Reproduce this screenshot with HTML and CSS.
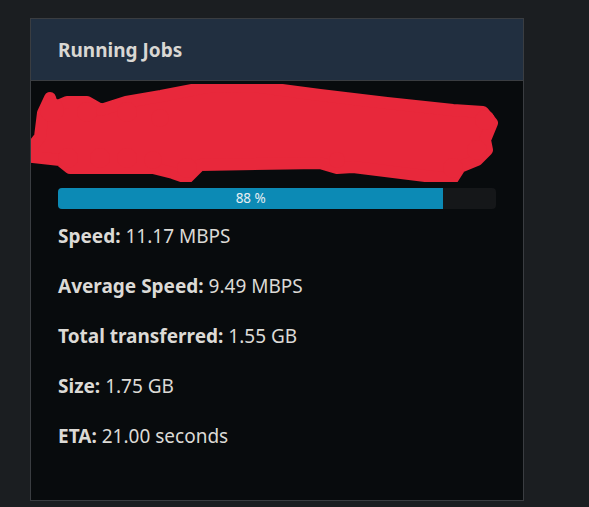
FILE: index.html
```html
<!DOCTYPE html>
<html>
<head>
<meta charset="utf-8">
<link rel="stylesheet" href="styles.css">
</head>
<body>
<div class="page">
  <section class="card">
    <header class="card-header"><h2 class="title">Running Jobs</h2></header>
    <div class="card-body">
      <svg class="redact" width="492" height="98" viewBox="0 0 492 98">
        <g fill="#e8283b">
          <path d="M19 14 L22 24 L36 18 L56 18 L70 26 L95 18 L130 12 L176 3 L222 2 L266 8 L289 11 L356 19 L422 26 L452 28 L461 39 L454 56 L456 66 L446 76 L429 83 L422 94 L402 93 L322 83 L306 84 L289 79 L169 81 L156 94 L142 89 L122 84 L96 84 L69 84 L39 84 L29 76 L2 73 L1 63 L9 53 L12 29 Z" stroke="#e8283b" stroke-width="12" stroke-linejoin="round"/>
          <circle cx="21" cy="26" r="12"/>
          <circle cx="56" cy="28" r="10"/>
          <circle cx="96" cy="28" r="10"/>
          <circle cx="129" cy="34" r="9"/>
          <circle cx="37" cy="74" r="10"/>
          <circle cx="69" cy="74" r="10"/>
          <circle cx="96" cy="74" r="10"/>
          <circle cx="122" cy="76" r="9"/>
          <circle cx="156" cy="84" r="10"/>
          <circle cx="306" cy="76" r="8"/>
          <circle cx="422" cy="84" r="10"/>
          <circle cx="446" cy="66" r="10"/>
          <circle cx="454" cy="36" r="10"/>
        </g>
      </svg>
      <div class="content">
        <div class="progress">
          <div class="progress-fill" style="width:88%">88 %</div>
        </div>
        <ul class="stats">
          <li><b>Speed:</b> 11.17 MBPS</li>
          <li><b>Average Speed:</b> 9.49 MBPS</li>
          <li><b>Total transferred:</b> 1.55 GB</li>
          <li><b>Size:</b> 1.75 GB</li>
          <li><b>ETA:</b> 21.00 seconds</li>
        </ul>
      </div>
    </div>
  </section>
</div>
</body>
</html>
```
FILE: styles.css
```css
html, body { margin: 0; padding: 0; }
body {
  background: #1b1e21;
  font-family: "Noto Sans", "Open Sans", sans-serif;
  color: #dcdad6;
  width: 589px;
  height: 507px;
  overflow: hidden;
}
.page { padding: 18px 0 0 30px; }
.card {
  width: 492px;
  height: 481px;
  border: 1px solid #3a3d41;
  background: #080b0d;
  display: flex;
  flex-direction: column;
}
.card-header {
  height: 61px;
  background: #212f40;
  border-bottom: 1px solid #3a3d41;
  display: flex;
  align-items: center;
  padding: 0 27px;
}
.title {
  margin: 0;
  font-size: 19px;
  font-weight: 700;
  color: #d9d7d3;
}
.card-body { padding-top: 3px; }
.redact { display: block; }
.content { padding: 6px 27px 0 27px; }
.progress {
  height: 21px;
  background: #151719;
  border-radius: 4px;
  overflow: hidden;
  display: flex;
}
.progress-fill {
  background: #0c8ab5;
  color: #e6eef2;
  font-size: 13.5px;
  line-height: 21px;
  text-align: center;
}
.stats {
  list-style: none;
  margin: 14px 0 0 0;
  padding: 0;
  display: flex;
  flex-direction: column;
  gap: 24px;
}
.stats li {
  font-size: 19px;
  line-height: 26px;
}
.stats b { font-weight: 700; }
```
